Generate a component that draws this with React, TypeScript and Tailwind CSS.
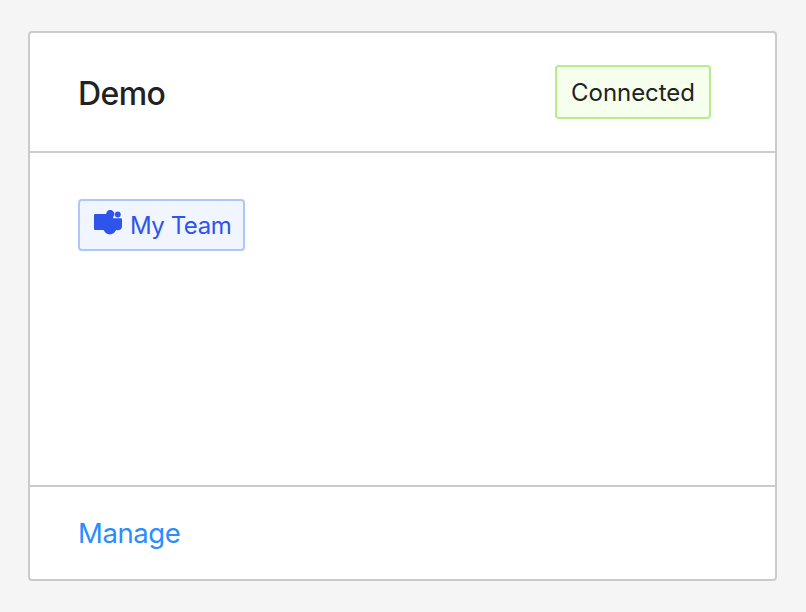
export default function App() {
  return (
    <main className="h-[612px] w-[806px] bg-[#f5f5f5] pt-[31px] pl-7 font-['Inter',sans-serif] text-[#222]">
      <section className="flex h-[550px] w-[749px] flex-col rounded-[4px] border-2 border-[#cbcbcb] bg-white">
        <header className="flex h-[120px] shrink-0 items-center justify-between border-b-2 border-[#cbcbcb] pr-16 pl-12">
          <h1 className="pt-[3px] text-[32px] leading-10 font-medium tracking-[-0.6px]">Demo</h1>
          <span className="flex h-[54px] w-[156px] items-center justify-center rounded-[4px] border-2 border-[#b7eb8f] bg-[#f6ffed] pt-0.5 text-2xl tracking-[-0.05px]">Connected</span>
        </header>
        <div className="flex grow items-start pt-[46px] pl-12">
          <span className="flex h-[52px] w-[167px] items-start gap-2 rounded-[4px] border-2 border-[#adc6ff] bg-[#f0f5ff] pt-[9px] pl-[14px] text-2xl whitespace-nowrap text-[#2f54eb]">
            <svg width="28" height="26" viewBox="0 0 28 26" fill="currentColor">
              <path d="M1.2 4H12.2A4.1 4.1 0 1 1 19.3 6.8Q18.8 7.6 19.4 8.2H26.6Q28 8.2 28 9.6V16.5C28 19.3 25.5 20.6 22 20C21 22.8 18.7 24.4 15.7 24.4C13 24.4 10.8 22.8 9.6 20H1.2Q0 20 0 18.8V5.2Q0 4 1.2 4Z" />
              <circle cx="23.8" cy="4.5" r="2.9" />
            </svg>
            <span className="tracking-[-0.45px]">My Team</span>
          </span>
        </div>
        <footer className="flex h-[94px] shrink-0 items-center border-t-2 border-[#cbcbcb] pl-12">
          <a className="pt-0.5 text-[27.5px] tracking-[-0.4px] text-[#2b8cff]">Manage</a>
        </footer>
      </section>
    </main>
  );
}
